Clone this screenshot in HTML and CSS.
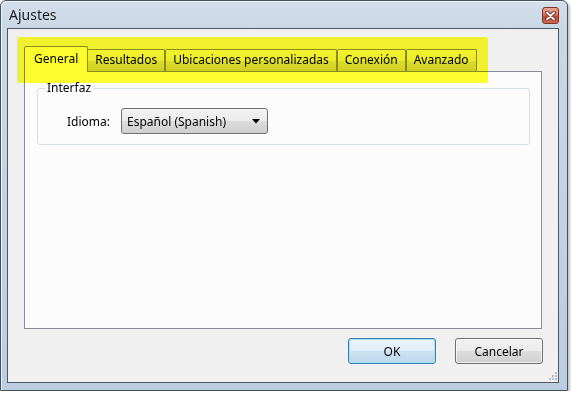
FILE: index.html
```html
<!DOCTYPE html>
<html lang="es">
<head>
<meta charset="utf-8">
<title>Ajustes</title>
<link rel="stylesheet" href="styles.css">
</head>
<body>
<div class="window">
  <div class="titlebar">
    <span class="title">Ajustes</span>
    <button class="close" aria-label="Cerrar">
      <svg width="11" height="10" viewBox="0 0 11 10"><path d="M2 1.5 L9 8.5 M9 1.5 L2 8.5" stroke="#5a1d14" stroke-width="3.4" stroke-linecap="round"/><path d="M2 1.5 L9 8.5 M9 1.5 L2 8.5" stroke="#ffffff" stroke-width="1.8" stroke-linecap="round"/></svg>
    </button>
  </div>
  <div class="client">
    <div class="tabs">
      <div class="tab selected">General</div>
      <div class="tab">Resultados</div>
      <div class="tab">Ubicaciones personalizadas</div>
      <div class="tab">Conexión</div>
      <div class="tab">Avanzado</div>
    </div>
    <div class="panel">
      <fieldset class="group">
        <legend>Interfaz</legend>
        <div class="row">
          <span class="label">Idioma:</span>
          <div class="combo">
            <span>Español (Spanish)</span>
            <svg class="arrow" width="8" height="5" viewBox="0 0 8 5"><path d="M0 0 H8 L4 4.5 Z" fill="#000"/></svg>
          </div>
        </div>
      </fieldset>
    </div>
    <div class="buttons">
      <button class="btn default">OK</button>
      <button class="btn">Cancelar</button>
    </div>
    <svg class="grip" width="9" height="9" viewBox="0 0 9 9">
      <g fill="#b8bcc2"><rect x="7" y="1" width="2" height="2"/><rect x="4" y="4" width="2" height="2"/><rect x="7" y="4" width="2" height="2"/><rect x="1" y="7" width="2" height="2"/><rect x="4" y="7" width="2" height="2"/><rect x="7" y="7" width="2" height="2"/></g>
    </svg>
  </div>
  <div class="highlight"></div>
</div>
</body>
</html>
```
FILE: styles.css
```css
* { box-sizing: border-box; }
html, body { margin: 0; padding: 0; background: #ffffff; }
body {
  font-family: "Noto Sans", "Open Sans", sans-serif;
  font-size: 12px;
  color: #000;
}
.window {
  position: relative;
  width: 568px;
  height: 391px;
  border: 1px solid #44505c;
  border-radius: 6px 6px 0 0;
  background: linear-gradient(180deg, #d3dfeb 0px, #cad7e5 27px, #bccddf 100%);
  padding: 0 8px 7px 6px;
  display: flex;
  flex-direction: column;
  box-shadow: 2px 2px 3px rgba(0,0,0,0.25), inset 1px 1px 0 rgba(255,255,255,0.7);
}
.titlebar {
  height: 27px;
  display: flex;
  justify-content: space-between;
  align-items: flex-start;
  padding: 5px 0 0 2px;
}
.title {
  font-size: 14px;
  line-height: 18px;
  color: #1b1b1b;
}
.close {
  width: 17px;
  height: 17px;
  padding: 0;
  margin-top: 1px;
  border: 1px solid #7d3428;
  border-radius: 3px;
  background: linear-gradient(180deg, #e8a898 0%, #d7745e 45%, #c04a32 55%, #d06a50 100%);
  display: flex;
  align-items: center;
  justify-content: center;
}
.client {
  position: relative;
  flex: 1;
  background: #f0f0f0;
  border: 1px solid #4d5863;
  padding: 17px 16px 18px 16px;
  display: flex;
  flex-direction: column;
}
.tabs {
  display: flex;
  align-items: flex-end;
  height: 25px;
  padding-left: 2px;
}
.tab {
  flex: none;
  height: 22px;
  padding: 0 7px;
  border: 1px solid #898c95;
  border-bottom: none;
  border-radius: 2px 2px 0 0;
  background: linear-gradient(180deg, #f3f3f3 0%, #ebebeb 50%, #dddddd 51%, #cfcfcf 100%);
  line-height: 20px;
  white-space: nowrap;
}
.tab.selected {
  position: relative;
  z-index: 1;
  height: 26px;
  margin: 0 -2px -1px -2px;
  padding: 0 9px;
  background: #fcfcfc;
  line-height: 24px;
}
.tab.selected + .tab { margin-left: 1px; }
.panel {
  flex: 1;
  background: #fcfcfc;
  border: 1px solid #898c95;
  padding: 8px 11px 0 12px;
}
.group {
  margin: 0;
  padding: 12px 10px 10px 0;
  border: 1px solid #d5dfe5;
  border-radius: 3px;
}
.group legend {
  padding: 0 2px;
  margin-left: 7px;
  line-height: 16px;
  color: #000;
}
.row {
  display: flex;
  align-items: center;
  padding-left: 29px;
}
.label { margin-right: 11px; }
.combo {
  width: 147px;
  height: 26px;
  border: 1px solid #707070;
  border-radius: 3px;
  background: linear-gradient(180deg, #f2f2f2 0%, #ebebeb 50%, #dddddd 51%, #cfcfcf 100%);
  display: flex;
  align-items: center;
  justify-content: space-between;
  padding: 0 7px 0 5px;
}
.arrow { margin-top: 1px; }
.buttons {
  display: flex;
  justify-content: flex-end;
  gap: 19px;
  margin-top: 9px;
  margin-right: -1px;
}
.btn {
  width: 88px;
  height: 26px;
  font-family: inherit;
  font-size: 12px;
  color: #000;
  padding: 0;
  border: 1px solid #707070;
  border-radius: 3px;
  background: linear-gradient(180deg, #f2f2f2 0%, #ebebeb 50%, #dddddd 51%, #cfcfcf 100%);
  box-shadow: inset 0 0 0 1px rgba(255,255,255,0.7);
}
.btn.default {
  border-color: #3c7fb1;
  background: linear-gradient(180deg, #eaf4fa 0%, #e0eef7 50%, #cbe2f0 51%, #bcd9ea 100%);
  box-shadow: inset 0 0 0 1px #a8dcf0;
}
.grip {
  position: absolute;
  right: 1px;
  bottom: 2px;
}
.highlight {
  position: absolute;
  left: 16px;
  top: 36px;
  width: 471px;
  height: 46px;
  border-radius: 3px;
  background: #ffff2e;
  mix-blend-mode: multiply;
  z-index: 5;
  pointer-events: none;
}
```
